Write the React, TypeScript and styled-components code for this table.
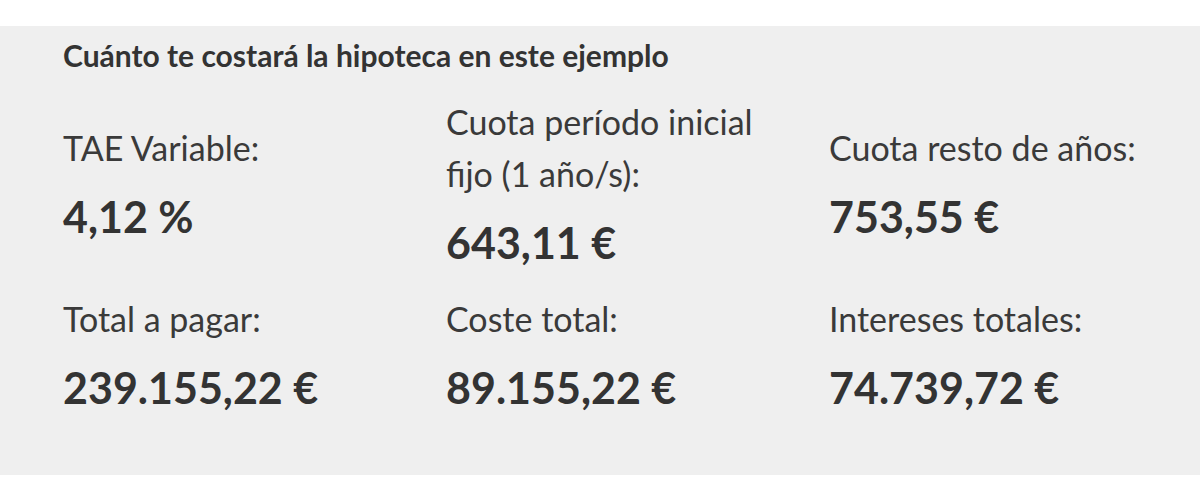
import React from 'react';
import styled, { createGlobalStyle } from 'styled-components';

interface Stat {
    label: string;
    value: string;
}

const stats: Stat[] = [
    { label: 'TAE Variable:', value: '4,12 %' },
    { label: 'Cuota período inicial fijo (1 año/s):', value: '643,11 €' },
    { label: 'Cuota resto de años:', value: '753,55 €' },
    { label: 'Total a pagar:', value: '239.155,22 €' },
    { label: 'Coste total:', value: '89.155,22 €' },
    { label: 'Intereses totales:', value: '74.739,72 €' },
];

export default function App() {
    return (
        <>
            <GlobalStyle />
            <Panel>
                <Title>Cuánto te costará la hipoteca en este ejemplo</Title>
                <StatsGrid>
                    {stats.map(s => (
                        <StatItem key={s.label}>
                            <Label>{s.label}</Label>
                            <Value>{s.value}</Value>
                        </StatItem>
                    ))}
                </StatsGrid>
            </Panel>
        </>
    );
}

const GlobalStyle = createGlobalStyle`
  body {
    margin: 0;
    background: #fff;
    font-family: Lato, "Open Sans", sans-serif;
    color: #333;
  }
`

const Panel = styled.section`
  margin-top: 26px;
  height: 449px;
  box-sizing: border-box;
  background-color: #efefef;
  padding: 11px 28px 0 63px;
`

const Title = styled.h2`
  margin: 0;
  font-size: 30px;
  line-height: 36px;
  font-weight: 700;
  color: #333;
`

const StatsGrid = styled.div`
  margin-top: 23px;
  display: grid;
  grid-template-columns: repeat(3, 1fr);
  column-gap: 40px;
  row-gap: 24px;
  align-items: center;
`

const StatItem = styled.div`
  display: flex;
  flex-direction: column;
  gap: 17px;
`

const Label = styled.span`
  font-size: 34px;
  line-height: 52px;
  font-weight: 400;
  color: #3a3a3a;
`

const Value = styled.span`
  font-size: 43px;
  line-height: 52px;
  font-weight: 700;
  color: #333;
`
